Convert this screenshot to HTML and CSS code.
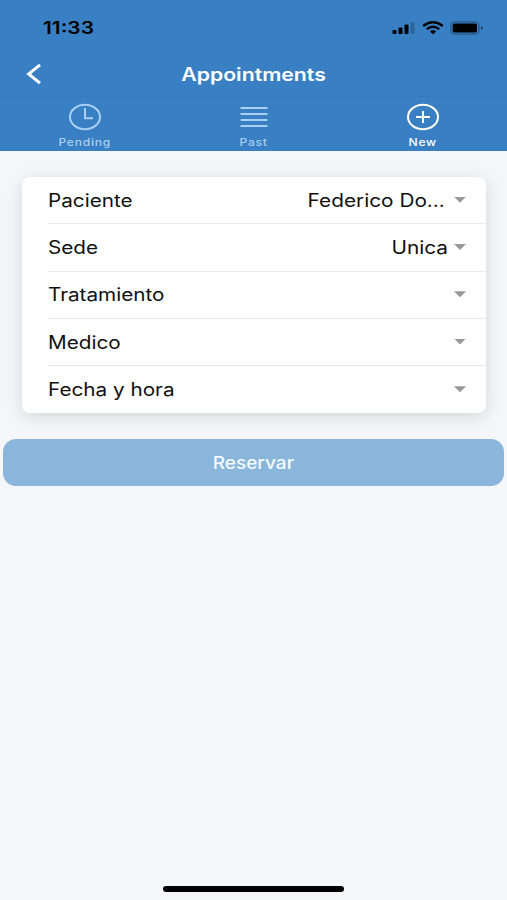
FILE: index.html
```html
<!DOCTYPE html>
<html lang="es">
<head>
    <meta charset="UTF-8">
    <meta name="viewport" content="width=device-width, initial-scale=1.0">
    <title>Appointments</title>
    <link rel="stylesheet" href="styles.css">
</head>
<body>
    <header class="header">
        <div class="status-bar">
            <span class="time wide">11:33</span>
            <div class="status-icons">
                <svg width="24" height="14" viewBox="0 0 24 14">
                    <rect x="0.5" y="9" width="4" height="4" rx="1"/>
                    <rect x="6.5" y="6.5" width="4" height="6.5" rx="1"/>
                    <rect x="12.5" y="3.5" width="4" height="9.5" rx="1"/>
                    <rect x="18.5" y="1" width="4" height="12" rx="1" opacity="0.2"/>
                </svg>
                <svg width="22" height="14" viewBox="0 0 22 14" fill="none" stroke="#000" stroke-width="2.3">
                    <path d="M1.2 5Q11 -2.4 20.8 5"/>
                    <path d="M4.8 8.2Q11 3.2 17.2 8.2"/>
                    <path d="M11 13.3L7.8 10.6Q11 8 14.2 10.6Z" fill="#000" stroke="none"/>
                </svg>
                <svg width="34" height="14" viewBox="0 0 34 14">
                    <rect x="0.9" y="0.9" width="28.2" height="12.2" rx="3.4" fill="none" stroke="#000" stroke-opacity="0.4"/>
                    <rect x="2.7" y="2.6" width="24.3" height="8.8" rx="1.6"/>
                    <path d="M31 5.2Q33 5.7 33 7T31 8.8Z" opacity="0.5"/>
                </svg>
            </div>
        </div>

        <div class="nav-bar">
            <svg class="back" width="16" height="22" viewBox="0 0 16 22" fill="none" stroke="#fff" stroke-width="3">
                <path d="M14 1.8L2.6 11L14 20.2"/>
            </svg>
            <h1 class="title wide">Appointments</h1>
        </div>

        <nav class="tabs">
            <div class="tab">
                <svg width="34" height="28" viewBox="0 0 34 28" fill="none" stroke="currentColor" stroke-width="2">
                    <ellipse cx="17" cy="14" rx="15" ry="12.2"/>
                    <path d="M17 5V15.2H25"/>
                </svg>
                <span class="tab-label wide">Pending</span>
            </div>
            <div class="tab">
                <svg width="34" height="28" viewBox="0 0 34 28" fill="none" stroke="currentColor" stroke-width="2">
                    <path d="M3.5 5H30.5M3.5 11H30.5M3.5 17H30.5M3.5 23H30.5"/>
                </svg>
                <span class="tab-label wide">Past</span>
            </div>
            <div class="tab active">
                <svg width="34" height="28" viewBox="0 0 34 28" fill="none" stroke="currentColor" stroke-width="2">
                    <ellipse cx="17" cy="14" rx="15" ry="12.2"/>
                    <path d="M10 14H24M17 8V20"/>
                </svg>
                <span class="tab-label wide">New</span>
            </div>
        </nav>
    </header>

    <main class="content">
        <div class="card">
            <div class="row">
                <span class="label wide">Paciente</span>
                <span class="value wide">Federico Do...</span>
                <span class="arrow"></span>
            </div>
            <div class="row">
                <span class="label wide">Sede</span>
                <span class="value value-short wide">Unica</span>
                <span class="arrow"></span>
            </div>
            <div class="row">
                <span class="label wide">Tratamiento</span>
                <span class="arrow"></span>
            </div>
            <div class="row">
                <span class="label wide">Medico</span>
                <span class="arrow"></span>
            </div>
            <div class="row">
                <span class="label wide">Fecha y hora</span>
                <span class="arrow"></span>
            </div>
        </div>

        <button class="reserve" disabled><span class="reserve-text wide">Reservar</span></button>
    </main>

    <div class="home-indicator"></div>
</body>
</html>
```

FILE: styles.css
```css
* {
    box-sizing: border-box;
}
body {
    margin: 0;
    height: 900px;
    display: flex;
    flex-direction: column;
    background: #f4f6fa;
    font-family: Inter, "Liberation Sans", sans-serif;
    color: #111;
    overflow: hidden;
}
/* extended letter shapes */
.wide {
    display: inline-block;
    transform: scaleX(1.18);
    white-space: nowrap;
}
.header {
    height: 151px;
    background: #387fc3;
    flex-shrink: 0;
}
.status-bar {
    height: 52px;
    padding: 3px 23px 0 43px;
    display: flex;
    align-items: center;
    justify-content: space-between;
}
.time {
    font-size: 17px;
    font-weight: 600;
    color: #000;
    transform: scaleX(1.23);
    transform-origin: left;
}
.status-icons {
    display: flex;
    gap: 6px;
}
.nav-bar {
    height: 45px;
    display: grid;
    grid-template-columns: 60px 1fr 60px;
    align-items: center;
    border-bottom: 1px solid #357abc;
}
.back {
    margin-left: 26px;
}
.title {
    margin: 0;
    font-size: 18px;
    font-weight: 600;
    color: #fff;
    text-align: center;
}
.tabs {
    height: 54px;
    display: grid;
    grid-template-columns: repeat(3, 1fr);
    padding-top: 6px;
}
.tab {
    display: flex;
    flex-direction: column;
    align-items: center;
    color: #a9d0f2;
}
.tab.active {
    color: #fff;
}
.tab-label {
    margin-top: 4px;
    font-size: 10px;
    line-height: 14px;
    font-weight: 500;
    letter-spacing: 0.6px;
    transform: scaleX(1.21);
}
.content {
    flex: 1;
    padding: 26px 3px 0;
}
.card {
    height: 236px;
    margin: 0 18px 0 19px;
    background: #fff;
    border-radius: 8px;
    box-shadow: 0 4px 18px rgba(0, 0, 0, 0.13);
}
.row {
    height: 47.3px;
    margin-left: 26px;
    padding-right: 20px;
    display: flex;
    align-items: center;
    border-bottom: 1px solid #e9eaec;
    font-size: 18px;
}
.row:last-child {
    border-bottom: none;
}
.label {
    transform: scaleX(1.15);
    transform-origin: left;
}
.value {
    margin-left: auto;
    margin-right: 9px;
    transform: scaleX(1.155);
    transform-origin: right;
}
.value-short {
    margin-right: 6px;
}
.arrow {
    width: 12px;
    height: 6px;
    margin-bottom: 1px;
    background: #999;
    clip-path: polygon(0 0, 100% 0, 50% 100%);
}
.label + .arrow {
    margin-left: auto;
}
.reserve {
    display: block;
    width: 501px;
    height: 47px;
    margin-top: 26px;
    padding: 0;
    border: none;
    border-radius: 13px;
    background: #8ab6db;
    color: #f5faff;
    font-family: inherit;
    font-size: 17px;
    font-weight: 500;
}
.reserve-text {
    transform: scaleX(1.12);
}
.home-indicator {
    width: 181px;
    height: 6px;
    margin: 0 auto 8px;
    border-radius: 3px;
    background: #000;
}
```
